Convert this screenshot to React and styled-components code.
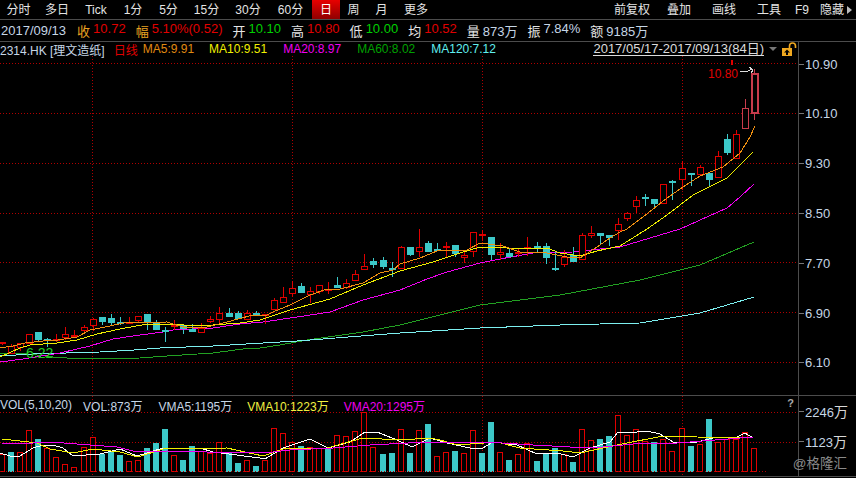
import React from "react";
import styled, { createGlobalStyle } from "styled-components";

const RED = "#e00000";
const CYAN = "#3cc8c8";
const GRID = "#b00000";
const LINE = "#4c4c4c";
const FONT = `"Liberation Sans", "Noto Sans CJK SC", sans-serif`;

const GlobalStyle = createGlobalStyle`
  html, body {
    margin: 0;
    background: #000;
    overflow: hidden;
  }
`;

const Page = styled.div`
  width: 856px;
  height: 478px;
  background: #000;
  font-family: ${FONT};
  font-size: 12px;
  color: #e4e4e4;
  white-space: nowrap;
`;

const Toolbar = styled.div`
  display: flex;
  height: 19px;
  border-bottom: 1px solid ${LINE};
`;

const Tab = styled.div`
  width: ${({ $w }) => $w}px;
  line-height: 20px;
  text-align: center;
  background: ${({ $active }) => ($active ? "linear-gradient(#e80000, #900000)" : "none")};
  color: ${({ $active }) => ($active ? "#fff" : "#e4e4e4")};
`;

const ToolbarRight = styled.div`
  display: flex;
  margin-left: auto;
  padding-right: 4px;
  align-items: center;
`;

const Tool = styled.div`
  margin-left: ${({ $gap }) => $gap}px;
  line-height: 20px;
`;

const Caret = styled.div`
  margin-left: 3px;
  border-left: 5px solid #bbb;
  border-top: 4px solid transparent;
  border-bottom: 4px solid transparent;
`;

const InfoRow = styled.div`
  display: flex;
  height: 21px;
  padding-left: 1px;
  gap: 10px;
  align-items: center;
  font-size: 13px;
  border-bottom: 1px solid ${LINE};
`;

const DateText = styled.span`
  color: #c6d6e6;
  margin-right: 1px;
`;

const Stat = styled.div`
  display: flex;
  gap: 3px;
`;

const StatLabel = styled.span`
  color: ${({ $hot }) => ($hot ? "#e8a020" : "#e4e4e4")};
`;

const StatValue = styled.span`
  color: ${({ $tone }) => ({ up: RED, down: "#00d000", plain: "#c6d6e6" }[$tone])};
`;

const Panel = styled.div`
  display: flex;
  height: ${({ $h }) => $h}px;
  border-bottom: 1px solid ${LINE};
`;

const Plot = styled.div`
  position: relative;
  width: 798px;
  overflow: hidden;
`;

const PlotSvg = styled.svg`
  display: block;
`;

const Legend = styled.div`
  position: absolute;
  top: ${({ $top }) => $top}px;
  left: 0;
  right: 0;
  display: flex;
  align-items: center;
  height: 16px;
`;

const LegendItem = styled.span`
  margin-left: ${({ $gap }) => $gap || 0}px;
  color: ${({ $color }) => $color || "#c6d6e6"};
`;

const RangeText = styled.span`
  margin-left: auto;
  font-size: 13px;
  color: #dcdcdc;
  border-bottom: 1px solid #dcdcdc;
  line-height: 13px;
`;

const RangeCaret = styled.div`
  margin: 0 5px;
  border-top: 4px solid #777;
  border-left: 4px solid transparent;
  border-right: 4px solid transparent;
`;

const LockIcon = styled.svg`
  display: block;
  margin-right: 1px;
`;

const PriceMark = styled.div`
  position: absolute;
  left: ${({ $x }) => $x}px;
  top: ${({ $y }) => $y}px;
  color: ${({ $color }) => $color};
  line-height: 14px;
  font-size: ${({ $size }) => $size || 12}px;
`;

const Hint = styled.div`
  position: absolute;
  right: 4px;
  top: 1px;
  color: #aaa;
  font-size: 11px;
  font-weight: bold;
`;

const Axis = styled.div`
  position: relative;
  display: flex;
  flex-direction: column;
  width: 57px;
  border-left: 1px solid ${LINE};
  padding-top: ${({ $top }) => $top}px;
  gap: ${({ $gap }) => $gap}px;
  box-sizing: border-box;
`;

const Tick = styled.div`
  display: flex;
  align-items: center;
  height: 20px;
  font-size: 13px;
  color: #c6d6e6;

  &::before {
    content: "";
    width: 5px;
    height: 1px;
    background: #777;
  }
`;

const TickText = styled.span`
  margin-left: 1px;
`;

const Unit = styled.span`
  font-size: 14px;
  color: #d8d8d8;
`;

const Watermark = styled.div`
  position: absolute;
  right: 8px;
  bottom: 4px;
  font-size: 13.5px;
  color: #8a8a8a;
`;

const LEFT_TABS = [
  ["分时", 37], ["多日", 40], ["Tick", 38], ["1分", 36], ["5分", 35], ["15分", 41],
  ["30分", 42], ["60分", 43], ["日", 28, true], ["周", 27], ["月", 29], ["更多", 40],
];

const RIGHT_TOOLS = [["前复权", 0], ["叠加", 17], ["画线", 21], ["工具", 21], ["F9", 14], ["隐藏", 11]];

const STATS = [
  ["收", "10.72", "up", true], ["幅", "5.10%(0.52)", "up", true], ["开", "10.10", "down"],
  ["高", "10.80", "up"], ["低", "10.00", "down"], ["均", "10.52", "up"],
  ["量", "873万", "plain"], ["振", "7.84%", "plain"], ["额", "9185万", "plain"],
];

const PRICE_TICKS = ["10.90", "10.10", "9.30", "8.50", "7.70", "6.90", "6.10"];
const GRID_X = [92, 292, 482, 682];
const GRID_Y = [63, 113, 163, 213, 262, 312, 362];

// type, body top, body bottom, high, low (page pixels)
const CANDLES = [
  ["r", 342, 343, 342, 345], ["r", 346, 353, 344, 353], ["r", 343, 347, 343, 351], ["r", 334, 343, 334, 343],
  ["c", 332, 340, 332, 342], ["c", 339, 340, 338, 347], ["r", 339, 340, 334, 342], ["r", 334, 337, 327, 340],
  ["r", 335, 336, 330, 337], ["r", 327, 330, 325, 334], ["r", 319, 325, 318, 331], ["c", 317, 322, 317, 325],
  ["c", 318, 323, 314, 325], ["c", 322, 324, 317, 325], ["r", 322, 323, 317, 323], ["r", 316, 320, 316, 323],
  ["c", 314, 322, 314, 330], ["c", 322, 330, 320, 330], ["c", 330, 331, 327, 342], ["r", 325, 326, 320, 330],
  ["c", 325, 329, 325, 334], ["c", 329, 332, 324, 332], ["r", 328, 332, 323, 332], ["r", 319, 321, 316, 323],
  ["r", 313, 319, 307, 323], ["c", 313, 317, 308, 317], ["c", 313, 319, 311, 319], ["r", 313, 319, 310, 320],
  ["c", 313, 314, 311, 314], ["r", 314, 315, 314, 324], ["r", 300, 309, 298, 310], ["r", 297, 302, 287, 303],
  ["r", 288, 293, 281, 297], ["c", 286, 293, 283, 293], ["r", 291, 294, 287, 303], ["r", 285, 291, 285, 294],
  ["r", 289, 290, 282, 294], ["c", 285, 288, 277, 288], ["r", 283, 287, 279, 289], ["r", 274, 280, 270, 280],
  ["r", 266, 269, 254, 270], ["c", 261, 265, 258, 268], ["c", 260, 267, 257, 269], ["c", 268, 269, 262, 277],
  ["r", 247, 268, 246, 269], ["c", 247, 255, 247, 256], ["r", 247, 251, 229, 257], ["c", 243, 252, 241, 252],
  ["c", 249, 250, 243, 250], ["r", 246, 247, 242, 257], ["c", 245, 254, 245, 257], ["r", 255, 257, 250, 263],
  ["r", 232, 251, 232, 257], ["r", 234, 235, 230, 241], ["c", 237, 255, 237, 260], ["r", 252, 254, 243, 260],
  ["c", 253, 257, 248, 257], ["r", 252, 253, 249, 257], ["r", 247, 248, 237, 256], ["c", 246, 247, 242, 252],
  ["c", 246, 258, 243, 264], ["c", 268, 269, 252, 271], ["r", 257, 264, 250, 267], ["c", 255, 262, 247, 262],
  ["r", 235, 259, 233, 260], ["r", 233, 235, 226, 238], ["c", 233, 236, 233, 244], ["c", 235, 238, 235, 246],
  ["r", 224, 230, 218, 240], ["r", 213, 218, 212, 221], ["r", 200, 206, 196, 213], ["c", 197, 198, 194, 206],
  ["c", 199, 204, 199, 207], ["r", 184, 203, 184, 203], ["c", 181, 183, 180, 200], ["r", 168, 179, 161, 190],
  ["c", 173, 174, 173, 186], ["r", 167, 174, 165, 175], ["c", 173, 180, 172, 187], ["r", 156, 177, 151, 177],
  ["c", 139, 153, 134, 155], ["r", 134, 158, 130, 158], ["r", 108, 128, 99, 128], ["r", 73, 112, 69, 120],
];

const VOLUME_TOPS = [
  ["r", 454], ["c", 452], ["r", 452], ["r", 430], ["c", 439], ["r", 448], ["r", 457], ["r", 464], ["r", 467], ["r", 447],
  ["r", 437], ["c", 454], ["c", 452], ["c", 455], ["r", 461], ["r", 460], ["c", 448], ["c", 443], ["c", 429], ["r", 455],
  ["c", 460], ["c", 446], ["r", 451], ["r", 453], ["r", 442], ["c", 452], ["c", 463], ["r", 460], ["c", 466], ["r", 460],
  ["r", 428], ["r", 433], ["r", 442], ["c", 446], ["r", 447], ["r", 448], ["c", 449], ["r", 435], ["r", 436], ["r", 431],
  ["r", 412], ["r", 447], ["c", 454], ["c", 453], ["r", 429], ["c", 453], ["r", 430], ["c", 424], ["r", 456], ["r", 452],
  ["c", 451], ["r", 453], ["r", 430], ["c", 453], ["c", 422], ["r", 452], ["c", 460], ["r", 454], ["r", 443], ["c", 461],
  ["c", 453], ["c", 448], ["r", 454], ["c", 462], ["r", 429], ["r", 440], ["c", 439], ["c", 436], ["r", 415], ["r", 435],
  ["r", 429], ["r", 441], ["c", 442], ["r", 439], ["r", 451], ["r", 428], ["c", 446], ["r", 444], ["c", 419], ["r", 442],
  ["r", 439], ["r", 439], ["r", 432], ["r", 448],
];

const MA_LINES = [
  ["#22a022", "0,354 20,353 53,357 80,359 140,358 167,356 213,353 243,349 260,348 280,345 307,340 363,332 400,325 480,305 560,295 640,280 700,265 754,242"],
  ["#7df0f0", "0,356 33,354 100,352 134,350 160,348 213,346 280,342 297,341 400,333 480,328 560,325 640,323 700,313 754,297"],
  ["#f000f0", "0,362 23,359 60,353 90,346 113,339 133,336 163,332 173,330 213,328 240,324 263,322 297,317 330,312 363,300 400,290 427,279 447,272 480,263 500,259 533,253 573,252 600,249 620,247 680,229 727,208 740,197 754,184"],
  ["#f0f000", "0,357 20,348 30,345 57,343 77,340 97,334 120,329 147,324 170,324 197,326 213,325 240,323 260,320 290,310 330,299 363,285 400,271 433,262 460,253 480,247 507,248 547,248 560,253 580,256 597,251 620,246 647,229 667,215 693,195 727,178 743,162 753,152"],
  ["#f09010", "0,348 13,346 25,343 43,341 58,340 77,337 90,330 110,326 123,323 167,322 173,324 187,328 207,327 227,322 253,315 267,315 273,312 290,305 310,295 327,289 340,289 363,283 380,273 393,270 400,264 420,258 437,251 467,250 480,243 503,246 520,252 547,253 567,257 580,258 597,247 610,238 620,232 627,229 643,217 667,198 683,187 700,176 723,167 740,153 750,137 755,126"],
];

const VMA_LINES = [
  ["#ffffff", "0,453 10,456 20,456 33,448 43,445 53,445 63,448 73,456 100,454 120,449 137,456 147,453 163,448 200,448 213,452 260,458 265,459 283,448 310,439 328,448 350,442 365,432 377,432 397,440 412,447 430,438 447,443 470,448 483,448 493,442 517,445 537,454 557,453 573,457 590,448 610,442 618,432 627,433 647,431 660,434 673,442 697,442 717,437 737,437 745,433 753,438"],
  ["#f0f000", "2,439 20,441 37,443 50,449 73,453 93,449 120,452 138,457 163,449 227,448 263,456 283,449 327,448 363,438 400,440 430,438 440,440 457,445 497,442 520,448 563,451 580,453 617,445 663,436 697,437 753,438"],
  ["#f000f0", "2,443 33,443 50,442 117,447 137,452 167,451 207,452 273,452 290,450 333,448 370,445 427,442 460,442 487,442 533,445 570,447 603,447 643,443 677,443 753,437"],
];

const barX = (i) => Math.round(2 + 9.06 * i);

const Candle = ({ data, index }) => {
  const [type, top, bottom, high, low] = data;
  const x = barX(index);
  const color = type === "r" ? RED : CYAN;
  const heavy = index >= 82;
  const stroke = heavy ? "#c83c4c" : color;
  const flat = bottom - top <= 1;
  return (
    <g>
      <line x1={x + 0.5} x2={x + 0.5} y1={high} y2={low} stroke={stroke} />
      {flat ? (
        <rect x={x - 3} y={top} width={7} height={2} fill={color} />
      ) : type === "r" ? (
        <rect x={x - 2.5} y={top + 0.5} width={6} height={bottom - top} fill="#000" stroke={stroke} strokeWidth={index === 83 ? 2 : 1} />
      ) : (
        <rect x={x - 3} y={top} width={7} height={bottom - top} fill={color} />
      )}
    </g>
  );
};

const VolumeBar = ({ data, index }) => {
  const [type, top] = data;
  const x = barX(index);
  return type === "r" ? (
    <rect x={x - 2.5} y={top + 0.5} width={5} height={471 - top} fill="#000" stroke={RED} />
  ) : (
    <rect x={x - 3} y={top} width={6} height={472 - top} fill={CYAN} />
  );
};

const GridLines = ({ rows, top, bottom }) => (
  <g stroke={GRID} strokeDasharray="1 2">
    {rows.map((y) => (
      <line key={y} x1="0" x2="798" y1={y + 0.5} y2={y + 0.5} />
    ))}
    {GRID_X.map((x) => (
      <line key={x} x1={x + 0.5} x2={x + 0.5} y1={top} y2={bottom} />
    ))}
  </g>
);

const Lines = ({ series }) =>
  series.map(([color, points]) => <polyline key={color} points={points} fill="none" stroke={color} />);

const App = () => (
  <Page>
    <GlobalStyle />
    <Toolbar>
      {LEFT_TABS.map(([label, w, active]) => (
        <Tab key={label} $w={w} $active={active}>
          {label}
        </Tab>
      ))}
      <ToolbarRight>
        {RIGHT_TOOLS.map(([label, gap]) => (
          <Tool key={label} $gap={gap}>
            {label}
          </Tool>
        ))}
        <Caret />
      </ToolbarRight>
    </Toolbar>

    <InfoRow>
      <DateText>2017/09/13</DateText>
      {STATS.map(([label, value, tone, hot]) => (
        <Stat key={label}>
          <StatLabel $hot={hot}>{label}</StatLabel>
          <StatValue $tone={tone}>{value}</StatValue>
        </Stat>
      ))}
    </InfoRow>

    <Panel $h={353}>
      <Plot>
        <PlotSvg width="798" height="353" viewBox="0 42 798 353" shapeRendering="crispEdges">
          <GridLines rows={GRID_Y} top={56} bottom={395} />
          <Lines series={MA_LINES.slice(0, 3)} />
          {CANDLES.map((candle, i) => (
            <Candle key={i} data={candle} index={i} />
          ))}
          <Lines series={MA_LINES.slice(3)} />
          <rect x="731" y="60" width="2" height="5" fill={RED} />
          <polyline points="740,72 748,71 752,69" fill="none" stroke="#ddd" />
          <polyline points="749,67 753,70 751,73" fill="none" stroke="#ddd" />
        </PlotSvg>
        <Legend $top={-1}>
          <LegendItem>2314.HK [理文造纸]</LegendItem>
          <LegendItem $gap={9} $color={RED}>日线</LegendItem>
          <LegendItem $gap={5} $color="#e08a10">MA5:9.91</LegendItem>
          <LegendItem $gap={15} $color="#f0f000">MA10:9.51</LegendItem>
          <LegendItem $gap={16} $color="#f000f0">MA20:8.97</LegendItem>
          <LegendItem $gap={16} $color="#00a000">MA60:8.02</LegendItem>
          <LegendItem $gap={16} $color="#60f0f0">MA120:7.12</LegendItem>
          <RangeText>2017/05/17-2017/09/13(84日)</RangeText>
          <RangeCaret />
          <LockIcon width="15" height="14" viewBox="0 0 15 14">
            <path d="M7.5 7V4a3 3 0 0 1 6 0v2" fill="none" stroke="#f0a820" strokeWidth="1.6" />
            <rect x="0" y="6" width="10" height="8" fill="#f0a820" />
            <path d="M5 7.5 8 10.5H6V13H4V10.5H2Z" fill="#000" />
          </LockIcon>
        </Legend>
        <PriceMark $x={708} $y={25} $color={RED}>10.80</PriceMark>
        <PriceMark $x={26} $y={304} $color="#20d020" $size={14}>6.22</PriceMark>
      </Plot>
      <Axis $top={12} $gap={29.83}>
        {PRICE_TICKS.map((tick) => (
          <Tick key={tick}>
            <TickText>{tick}</TickText>
          </Tick>
        ))}
      </Axis>
    </Panel>

    <Panel $h={80}>
      <Plot>
        <PlotSvg width="798" height="80" viewBox="0 396 798 80" shapeRendering="crispEdges">
          <GridLines rows={[412, 442]} top={396} bottom={476} />
          {VOLUME_TOPS.map((bar, i) => (
            <VolumeBar key={i} data={bar} index={i} />
          ))}
          <Lines series={VMA_LINES} />
          <line x1="0" x2="767" y1="471.5" y2="471.5" stroke={GRID} strokeDasharray="1 2" />
        </PlotSvg>
        <Legend $top={1}>
          <LegendItem>VOL(5,10,20)</LegendItem>
          <LegendItem $gap={11}>VOL:873万</LegendItem>
          <LegendItem $gap={16}>VMA5:1195万</LegendItem>
          <LegendItem $gap={15} $color="#f0f040">VMA10:1223万</LegendItem>
          <LegendItem $gap={15} $color="#f000f0">VMA20:1295万</LegendItem>
        </Legend>
        <Hint>?</Hint>
      </Plot>
      <Axis $top={5} $gap={10}>
        <Tick>
          <TickText>2246<Unit>万</Unit></TickText>
        </Tick>
        <Tick>
          <TickText>1123<Unit>万</Unit></TickText>
        </Tick>
        <Watermark>@格隆汇</Watermark>
      </Axis>
    </Panel>
  </Page>
);

export default App;
